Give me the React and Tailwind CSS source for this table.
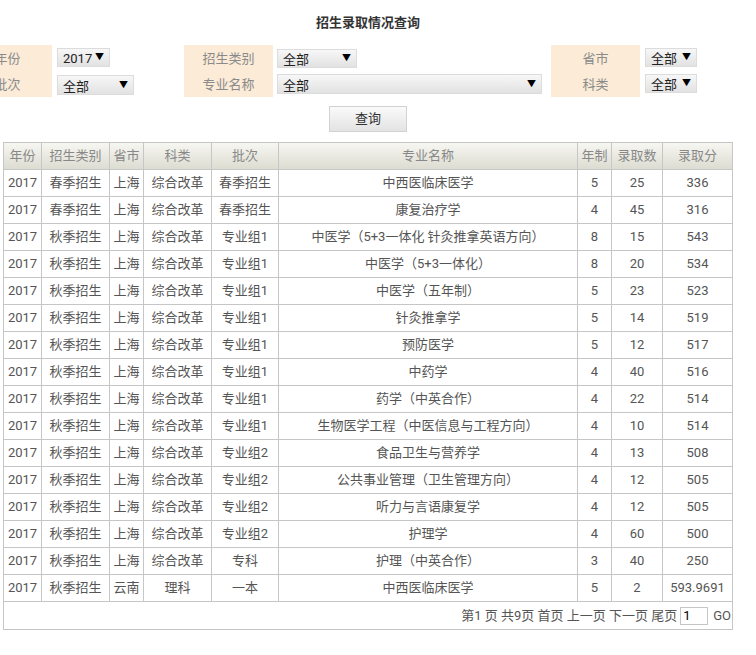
const rows = [
  ["2017", "春季招生", "上海", "综合改革", "春季招生", "中西医临床医学", "5", "25", "336"],
  ["2017", "春季招生", "上海", "综合改革", "春季招生", "康复治疗学", "4", "45", "316"],
  ["2017", "秋季招生", "上海", "综合改革", "专业组1", "中医学（5+3一体化 针灸推拿英语方向）", "8", "15", "543"],
  ["2017", "秋季招生", "上海", "综合改革", "专业组1", "中医学（5+3一体化）", "8", "20", "534"],
  ["2017", "秋季招生", "上海", "综合改革", "专业组1", "中医学（五年制）", "5", "23", "523"],
  ["2017", "秋季招生", "上海", "综合改革", "专业组1", "针灸推拿学", "5", "14", "519"],
  ["2017", "秋季招生", "上海", "综合改革", "专业组1", "预防医学", "5", "12", "517"],
  ["2017", "秋季招生", "上海", "综合改革", "专业组1", "中药学", "4", "40", "516"],
  ["2017", "秋季招生", "上海", "综合改革", "专业组1", "药学（中英合作）", "4", "22", "514"],
  ["2017", "秋季招生", "上海", "综合改革", "专业组1", "生物医学工程（中医信息与工程方向）", "4", "10", "514"],
  ["2017", "秋季招生", "上海", "综合改革", "专业组2", "食品卫生与营养学", "4", "13", "508"],
  ["2017", "秋季招生", "上海", "综合改革", "专业组2", "公共事业管理（卫生管理方向）", "4", "12", "505"],
  ["2017", "秋季招生", "上海", "综合改革", "专业组2", "听力与言语康复学", "4", "12", "505"],
  ["2017", "秋季招生", "上海", "综合改革", "专业组2", "护理学", "4", "60", "500"],
  ["2017", "秋季招生", "上海", "综合改革", "专科", "护理（中英合作）", "3", "40", "250"],
  ["2017", "秋季招生", "云南", "理科", "一本", "中西医临床医学", "5", "2", "593.9691"],
];

const heads = ["年份", "招生类别", "省市", "科类", "批次", "专业名称", "年制", "录取数", "录取分"];
const widths = [38, 68, 34, 68, 67, 299, 34, 51, 70];

const Select = ({ value, w, h = "h-[19px]" }) => (
  <div
    className={`${w} ${h} flex items-center justify-between px-[5px] text-[13px] text-[#222] bg-gradient-to-b from-[#f7f7f7] to-[#e2e2e2] border border-[#dcdcdc]`}
  >
    <span className="leading-none pt-[2px]">{value}</span>
    <span className="text-[9px] leading-none text-black">▼</span>
  </div>
);

const Label = ({ a, b }) => (
  <div className="w-[89px] h-[52px] bg-[#fbebd7] flex flex-col items-center justify-center gap-[13px] text-[13px] text-[#8a8a8a] leading-none">
    <span>{a}</span>
    <span>{b}</span>
  </div>
);

export default function App() {
  return (
    <div
      className="w-[756px] h-[655px] bg-white overflow-hidden"
      style={{ fontFamily: "Roboto, 'Noto Sans CJK SC', sans-serif" }}
    >
      <div className="w-[736px]">
        <div className="h-[45px] pt-[16px] text-center text-[13px] font-bold text-[#333] leading-none">
          招生录取情况查询
        </div>
        <div className="flex items-start">
          <div className="-ml-[37px]">
            <Label a="年份" b="批次" />
          </div>
          <div className="ml-[5px] w-[127px] flex flex-col pt-[3px] gap-[8px]">
            <Select value="2017" w="w-[53px]" />
            <Select value="全部" w="w-[77px]" h="h-[20px]" />
          </div>
          <Label a="招生类别" b="专业名称" />
          <div className="ml-[4px] w-[274px] flex flex-col pt-[4px] gap-[6px]">
            <Select value="全部" w="w-[80px]" />
            <Select value="全部" w="w-[265px]" h="h-[20px]" />
          </div>
          <Label a="省市" b="科类" />
          <div className="ml-[5px] flex flex-col pt-[3px] gap-[7px]">
            <Select value="全部" w="w-[52px]" />
            <Select value="全部" w="w-[52px]" />
          </div>
        </div>
        <div className="flex justify-center mt-[9px]">
          <button className="w-[78px] h-[26px] text-[13px] text-[#333] bg-gradient-to-b from-[#fafafa] to-[#e3e3e3] border border-[#d2d2d2]">
            查询
          </button>
        </div>
        <table className="ml-[3px] mt-[10px] border-collapse table-fixed w-[730px] text-[13px] text-[#555]">
          <colgroup>
            {widths.map((w, i) => (
              <col key={i} style={{ width: w }} />
            ))}
          </colgroup>
          <thead>
            <tr className="h-[27px] bg-gradient-to-b from-[#f7f7f2] to-[#dcdbd0]">
              {heads.map((h) => (
                <th key={h} className="border border-[#c6c6c6] font-normal text-[#888] text-center p-0">
                  {h}
                </th>
              ))}
            </tr>
          </thead>
          <tbody>
            {rows.map((r, i) => (
              <tr key={i} className="h-[27px]">
                {r.map((c, j) => (
                  <td key={j} className="border border-[#c6c6c6] text-center p-0 whitespace-nowrap">
                    {c}
                  </td>
                ))}
              </tr>
            ))}
            <tr className="h-[28px]">
              <td colSpan={9} className="border border-[#c6c6c6] p-0">
                <div className="flex items-center justify-end gap-[3px] pr-[1px] pt-[1px]">
                  <span>第1 页 共9页 首页 上一页 下一页 尾页</span>
                  <span className="w-[28px] h-[18px] border border-[#c6c6c6] px-[2px] leading-[16px] text-black">1</span>
                  <span className="ml-[2px]">GO</span>
                </div>
              </td>
            </tr>
          </tbody>
        </table>
      </div>
    </div>
  );
}
